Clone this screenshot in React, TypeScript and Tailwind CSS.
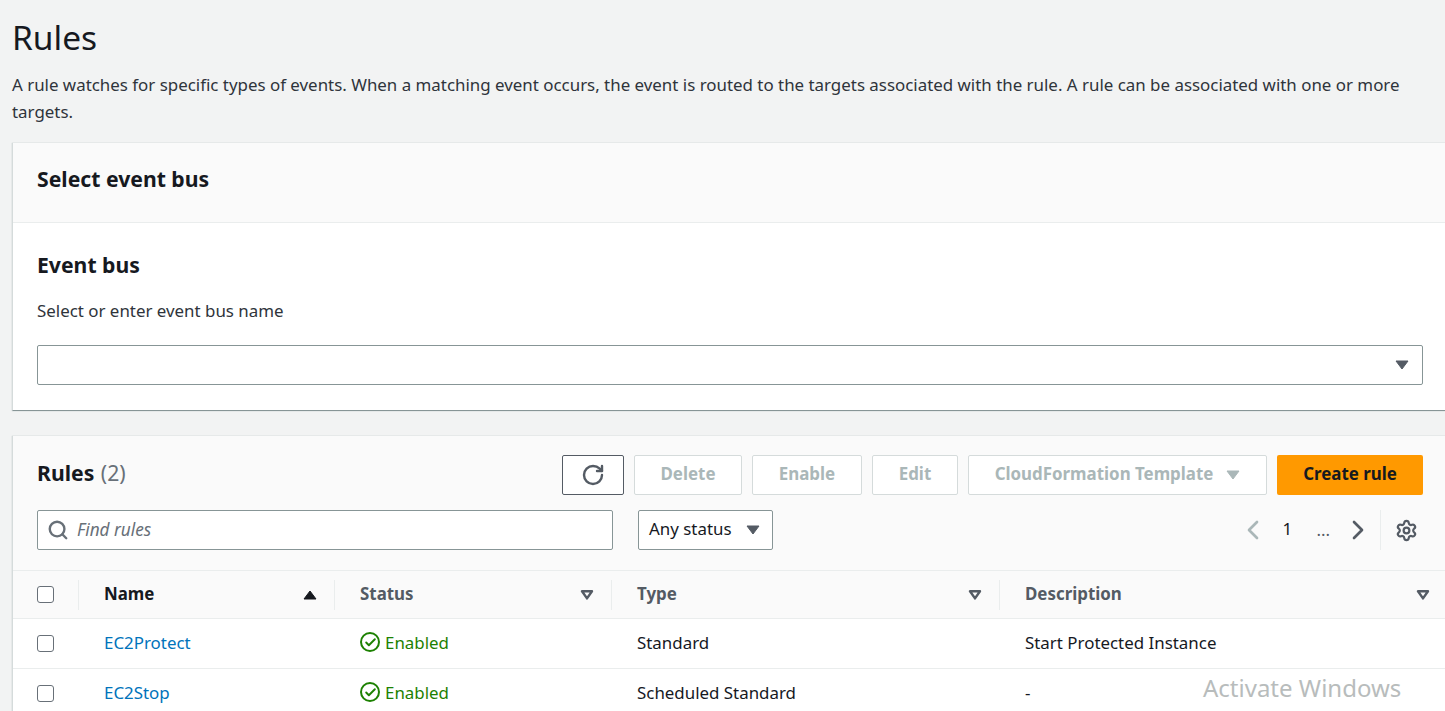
import { Check, ChevronLeft, ChevronRight, RotateCw, Search, Settings } from "lucide-react";

const cols = "grid grid-cols-[65px_256px_277px_388px_1fr]";

const Caret = ({ className }: { className: string }) => (
  <svg width="14" height="10" viewBox="0 0 14 10" className={className}>
    <path d="M1 1h12L7 9z" fill="currentColor" stroke="currentColor" strokeWidth="1" strokeLinejoin="round" />
  </svg>
);

const FilterCaret = () => (
  <svg width="14" height="10" viewBox="0 0 14 10" className="text-[#545b64]">
    <path d="M2 1.2h10L7 8.4z" fill="none" stroke="currentColor" strokeWidth="2.4" strokeLinejoin="round" />
  </svg>
);

const Box = () => <span className="block h-[17px] w-[17px] rounded-[3px] border border-[#687078] bg-white" />;

const DisabledButton = ({ label, width }: { label: string; width: string }) => (
  <button className={`h-10 ${width} rounded-[2px] border border-[#d5dbdb] bg-white pb-[2px] text-center font-bold text-[#aab7b8]`}>
    {label}
  </button>
);

const HeadCell = ({ label, first, last }: { label: string; first?: boolean; last?: boolean }) => (
  <div className={`flex h-[30px] items-center justify-between border-l border-[#eaeded] pl-[25px] ${last ? "pr-[15px]" : "pr-[17px]"}`}>
    <span className={`pb-[1px] font-bold ${first ? "text-[#16191f]" : "text-[#545b64]"}`}>{label}</span>
    {first ? <Caret className="rotate-180 text-[#16191f]" /> : <FilterCaret />}
  </div>
);

const Row = ({ name, type, description }: { name: string; type: string; description: string }) => (
  <div className={`${cols} h-[50px] items-center border-t border-[#eaeded] bg-white text-[#16191f]`}>
    <div className="pl-[24px]"><Box /></div>
    <div className="pb-[2px] pl-[26px] text-[#0073bb]">{name}</div>
    <div className="flex items-center gap-[5px] pb-[2px] pl-[26px] text-[#1d8102]">
      <span className="flex h-5 w-5 items-center justify-center rounded-full border-2 border-[#1d8102]">
        <Check size={13} strokeWidth={3.5} />
      </span>
      Enabled
    </div>
    <div className="pb-[2px] pl-[26px]">{type}</div>
    <div className="pb-[2px] pl-[26px]">{description}</div>
  </div>
);

export default function App() {
  return (
    <div className="relative h-[711px] overflow-hidden bg-[#f2f3f3] pl-3 font-['Noto_Sans',sans-serif] text-[16.9px] text-[#16191f]">
      <h1 className="pt-[14px] text-[33.5px] leading-[46px] font-normal">Rules</h1>
      <p className="mt-[11px] pr-4 leading-[27px] text-[#2f343b]">
        A rule watches for specific types of events. When a matching event occurs, the event is routed to the targets associated with the rule. A rule can be associated with one or more targets.
      </p>

      <section className="mt-[18px] h-[268px] border-b border-l border-[#d5dbdb] border-b-[#879596] bg-white shadow-[0_0_1px_#aab7b8]">
        <div className="flex h-[80px] items-center border-b border-[#eaeded] bg-[#fafafa] pl-[24px] pb-[8px] text-[21.2px] font-bold">
          Select event bus
        </div>
        <div className="pl-[24px] pr-[22px] pt-[27px]">
          <h2 className="text-[21.2px] leading-[30px] font-bold">Event bus</h2>
          <p className="mt-[20px] leading-[22px] text-[#2f343b]">Select or enter event bus name</p>
          <div className="mt-[23px] flex h-10 items-center justify-end rounded-[2px] border border-[#879596] bg-white pr-[13px]">
            <Caret className="text-[#545b64]" />
          </div>
        </div>
      </section>

      <section className="mt-[25px] border-l border-[#d5dbdb] bg-[#fafafa] shadow-[0_0_1px_#aab7b8]">
        <div className="flex h-[59px] items-end justify-between pl-[24px] pr-[22px]">
          <h2 className="pb-[7px] text-[21.2px] leading-[30px] font-bold">
            Rules <span className="ml-[1px] font-normal text-[#687078]">(2)</span>
          </h2>
          <div className="flex gap-[10px]">
            <button className="flex h-10 w-[62px] items-center justify-center rounded-[2px] border border-[#545b64] bg-white text-[#545b64]">
              <RotateCw size={24} strokeWidth={2.4} />
            </button>
            <DisabledButton label="Delete" width="w-[108px]" />
            <DisabledButton label="Enable" width="w-[110px]" />
            <DisabledButton label="Edit" width="w-[86px]" />
            <button className="flex h-10 w-[299px] items-center justify-center gap-[13px] rounded-[2px] border border-[#d5dbdb] bg-white font-bold text-[#aab7b8]">
              <span className="pb-[2px]">CloudFormation Template</span>
              <Caret className="text-[#aab7b8]" />
            </button>
            <button className="h-10 w-[146px] rounded-[2px] bg-[#ff9900] pb-[2px] font-bold text-[#16191f]">Create rule</button>
          </div>
        </div>

        <div className="flex h-[75px] items-start pl-[24px] pr-[22px] pt-[15px]">
          <div className="flex h-10 w-[576px] items-center gap-[8px] rounded-[2px] border border-[#879596] bg-white pl-[9px]">
            <Search size={22} strokeWidth={2.6} className="text-[#687078]" />
            <span className="text-[17.2px] text-[#687078] italic">Find rules</span>
          </div>
          <div className="ml-[25px] flex h-10 w-[135px] items-center justify-between rounded-[2px] border border-[#879596] bg-white pl-[10px] pr-[12px]">
            <span className="pb-[2px]">Any status</span>
            <Caret className="text-[#545b64]" />
          </div>
          <div className="ml-auto flex h-10 items-center">
            <ChevronLeft size={32} strokeWidth={2} className="text-[#aab7b8]" />
            <span className="ml-[10px] w-[16px] pb-[2px] text-center">1</span>
            <span className="ml-[21px] text-[#545b64]">...</span>
            <ChevronRight size={32} strokeWidth={2} className="ml-[12px] text-[#545b64]" />
            <span className="ml-[6px] h-10 border-l border-[#eaeded]" />
            <Settings size={23} strokeWidth={2.3} className="ml-[14px] mr-[5px] text-[#545b64]" />
          </div>
        </div>

        <div className={`${cols} h-[48px] items-center border-t border-[#eaeded]`}>
          <div className="flex h-[30px] items-center pl-[24px]"><Box /></div>
          <HeadCell label="Name" first />
          <HeadCell label="Status" />
          <HeadCell label="Type" />
          <HeadCell label="Description" last />
        </div>
        <Row name="EC2Protect" type="Standard" description="Start Protected Instance" />
        <Row name="EC2Stop" type="Scheduled Standard" description="-" />
      </section>

      <span className="absolute left-[1203px] top-[670px] text-[24px] text-[#b8bcbc]">Activate Windows</span>
    </div>
  );
}
